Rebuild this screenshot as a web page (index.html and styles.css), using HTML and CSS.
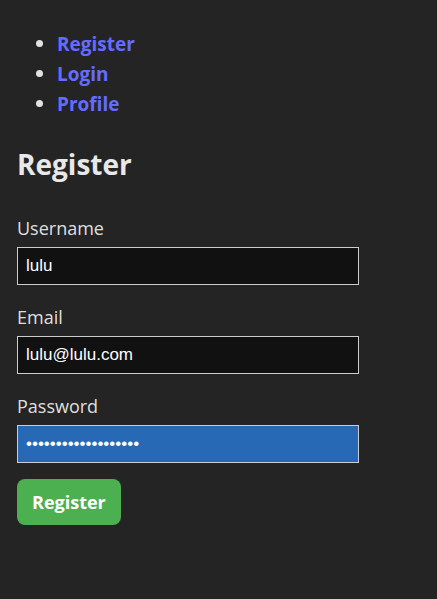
FILE: index.html
```html
<!DOCTYPE html>
<html lang="en">
<head>
<meta charset="utf-8">
<title>Register</title>
<link rel="stylesheet" href="styles.css">
</head>
<body>
<div class="app">
  <ul class="nav">
    <li><a href="#">Register</a></li>
    <li><a href="#">Login</a></li>
    <li><a href="#">Profile</a></li>
  </ul>
  <h2 class="title">Register</h2>
  <form class="form">
    <div class="field">
      <label class="label" for="u">Username</label>
      <input class="input" id="u" type="text" value="lulu">
    </div>
    <div class="field">
      <label class="label" for="e">Email</label>
      <input class="input" id="e" type="email" value="lulu@lulu.com">
    </div>
    <div class="field field-last">
      <label class="label" for="p">Password</label>
      <input class="input input-filled" id="p" type="password" value="lulululululululul12">
    </div>
    <div class="actions">
      <button class="btn" type="button">Register</button>
    </div>
  </form>
</div>
</body>
</html>
```
FILE: styles.css
```css
html, body {
  margin: 0;
  padding: 0;
  background: #242424;
}
body {
  font-family: "Open Sans", "Noto Sans", sans-serif;
  color: rgba(255, 255, 255, 0.87);
  font-size: 20px;
  line-height: 1.5;
  width: 437px;
  height: 599px;
  overflow: hidden;
}
.app {
  padding: 29px 17px 0 17px;
}
.nav {
  margin: 0;
  padding-left: 40px;
  list-style: disc;
  line-height: 30px;
  font-size: 20px;
}
.nav a {
  color: #646cff;
  font-size: 19px;
  font-weight: 700;
  text-decoration: none;
}
.title {
  margin: 23px 0 0 0;
  font-size: 28px;
  line-height: 45px;
  font-weight: 700;
  color: #e8e8e8;
}
.form {
  margin-top: 26px;
  display: flex;
  flex-direction: column;
}
.field {
  display: flex;
  flex-direction: column;
  gap: 5px;
  margin-bottom: 17px;
}
.field-last {
  margin-bottom: 16px;
}
.label {
  font-size: 18px;
  line-height: 27px;
  padding-top: 2px;
}
.input {
  box-sizing: border-box;
  width: 342px;
  height: 38px;
  padding: 0 8px;
  border: 1px solid #cccccc;
  background: #111111;
  color: #ffffff;
  font-family: "Liberation Sans", Arial, sans-serif;
  font-size: 17px;
  outline: none;
}
.input-filled {
  background: #2769b4;
}
.actions {
  display: flex;
}
.btn {
  background: #4caf50;
  color: #ffffff;
  border: none;
  border-radius: 8px;
  padding: 10px 15px;
  font-family: "Open Sans", "Noto Sans", sans-serif;
  font-size: 18px;
  line-height: 26px;
  font-weight: 700;
}
```
